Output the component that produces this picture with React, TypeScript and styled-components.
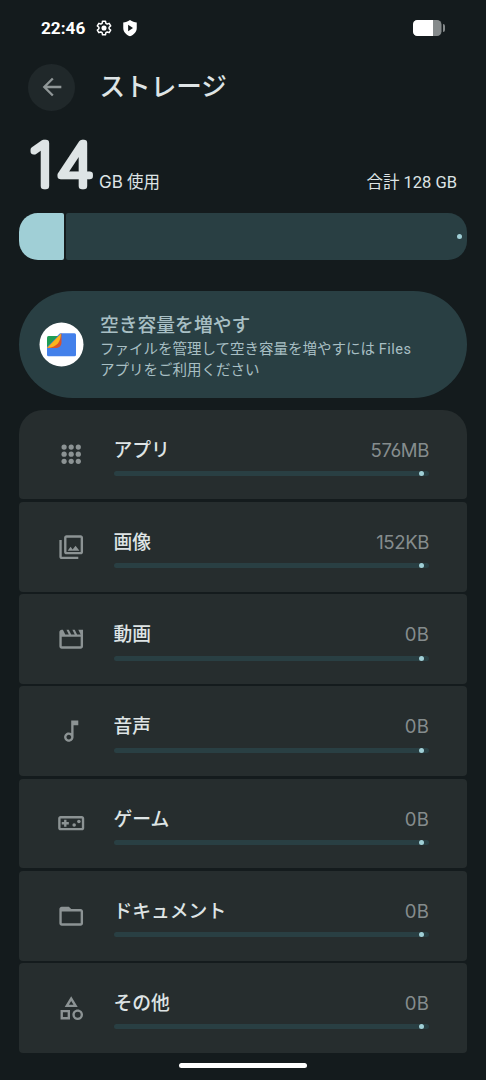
import React from "react";
import styled, { createGlobalStyle } from "styled-components";
import type { IconType } from "react-icons";
import {
  MdArrowBack,
  MdFolderOpen,
  MdOutlineAudiotrack,
  MdOutlineCategory,
  MdOutlinePhotoLibrary,
  MdOutlineVideogameAsset,
} from "react-icons/md";

const GlobalStyle = createGlobalStyle`
  * { box-sizing: border-box; }
  body {
    margin: 0;
    background: #141b1d;
    color: #dee4e5;
    font-family: Roboto, "Noto Sans CJK JP", sans-serif;
  }
`;

const Screen = styled.main`
  width: 486px;
  height: 1080px;
  padding: 0 19px;
  display: flex;
  flex-direction: column;
  overflow: hidden;
`;

const StatusBar = styled.div`
  height: 56px;
  padding: 0 22px;
  display: flex;
  align-items: center;
  color: #fff;
`;

const Clock = styled.span`
  width: 54px;
  font-size: 17.2px;
  font-weight: 700;
  line-height: 20px;
`;

const StatusIcon = styled.svg`
  width: 18px;
  height: 18px;
  margin-right: 8px;
`;

const Battery = styled.svg`
  width: 32px;
  height: 16px;
  margin-left: auto;
`;

const Header = styled.header`
  height: 63px;
  padding: 0 0 0.5px 9.2px;
  display: flex;
  align-items: center;
  gap: 24.3px;
`;

const BackButton = styled.button`
  width: 47px;
  height: 47px;
  border: 0;
  padding: 0;
  border-radius: 50%;
  background: #20282a;
  color: #8f9697;
  display: grid;
  place-items: center;
  font-size: 28px;
  svg { display: block; }
`;

const Title = styled.h1`
  margin: 0;
  font-size: 25.6px;
  font-weight: 500;
  line-height: 36px;
`;

const Usage = styled.section`
  height: 93.5px;
  padding: 0 10px 18px 11px;
  display: flex;
  align-items: flex-end;
  font-size: 16.5px;
  line-height: 24px;
`;

const BigNumber = styled.svg`
  width: 67px;
  height: 60px;
  margin-right: 2px;
  overflow: visible;
  text {
    font-family: Inter, sans-serif;
    font-size: 59px;
    font-weight: 100;
    fill: #dee4e5;
    stroke: #dee4e5;
    stroke-width: 6.4px;
    stroke-linejoin: round;
  }
`;

const Unit = styled.span`
  b {
    font-family: Inter, sans-serif;
    font-weight: 400;
    font-size: 17px;
  }
`;

const Total = styled.span`
  margin-left: auto;
`;

const StorageBar = styled.div`
  height: 47.5px;
  display: flex;
  gap: 2px;
`;

const UsedPart = styled.div`
  width: 44.5px;
  border-radius: 19px 2px 2px 19px;
  background: #a0cfd6;
`;

const FreePart = styled.div`
  flex: 1;
  padding-right: 5px;
  display: flex;
  align-items: center;
  justify-content: flex-end;
  border-radius: 2px 19px 19px 2px;
  background: #293f43;
`;

const StopDot = styled.i`
  width: 5px;
  height: 5px;
  border-radius: 50%;
  background: #a0cfd6;
`;

const FilesCard = styled.section`
  height: 107.5px;
  margin-top: 30.5px;
  padding-left: 20px;
  border-radius: 54px;
  background: #293f43;
  color: #a8bfc4;
  display: flex;
  align-items: center;
  gap: 16px;
`;

const FilesLogo = styled.svg`
  width: 45px;
  height: 45px;
  flex: none;
`;

const FilesCopy = styled.div`
  padding-top: 6px;
`;

const FilesTitle = styled.h2`
  margin: 0;
  font-size: 18.8px;
  font-weight: 500;
  line-height: 27px;
`;

const FilesText = styled.p`
  margin: 0;
  font-size: 14.5px;
  line-height: 20.5px;
  b {
    font-weight: 400;
    letter-spacing: 0.5px;
  }
`;

const List = styled.ul`
  list-style: none;
  margin: 11.6px 0 0;
  padding: 0;
  display: flex;
  flex-direction: column;
  gap: 2.35px;
`;

const Row = styled.li`
  height: 89.9px;
  padding: 0 38px 0 37.5px;
  display: flex;
  align-items: center;
  border-radius: 4px;
  background: #262d2e;
  &:first-child { border-radius: 24px 24px 4px 4px; }
`;

const RowIcon = styled.span`
  width: 57px;
  color: #8c9394;
  font-size: 28.4px;
  svg { display: block; }
`;

const RowBody = styled.div`
  flex: 1;
  padding-top: 2.6px;
`;

const RowLine = styled.div`
  display: flex;
  justify-content: space-between;
  align-items: baseline;
  line-height: 28px;
  margin-bottom: 6.5px;
`;

const RowLabel = styled.span`
  font-size: 18.8px;
  font-weight: 500;
`;

const RowSize = styled.span<{ $tight: boolean }>`
  font-family: Inter, sans-serif;
  font-feature-settings: "cv03";
  font-size: 18.6px;
  letter-spacing: ${(p) => (p.$tight ? "-0.4px" : "0.3px")};
  margin-right: ${(p) => (p.$tight ? "0" : "-0.3px")};
  color: #858c8d;
`;

const Track = styled.div`
  height: 5px;
  padding-right: 5px;
  display: flex;
  align-items: center;
  justify-content: flex-end;
  border-radius: 2.5px;
  background: #293f43;
`;

const HomeHandle = styled.div`
  width: 128px;
  height: 4.5px;
  margin: 10.5px auto 0;
  border-radius: 3px;
  background: #fff;
`;

const AppsGrid: IconType = () => (
  <svg width="1em" height="1em" viewBox="0 0 24 24" fill="currentColor">
    {[6, 12, 18].map((y) =>
      [6, 12, 18].map((x) => <circle key={`${x}-${y}`} cx={x} cy={y} r="2.2" />),
    )}
  </svg>
);

const Clapper: IconType = () => (
  <svg width="1em" height="1em" viewBox="0 0 24 24" fill="currentColor">
    <path d="M18 4l2 4h-3l-2-4h-2l2 4h-3l-2-4H8l2 4H7L5 4H4c-1.1 0-2 .9-2 2v12c0 1.1.9 2 2 2h16c1.1 0 2-.9 2-2V4h-4zm2 14H4v-8h16v8z" />
  </svg>
);

const categories: { label: string; size: string; Icon: IconType }[] = [
  { label: "アプリ", size: "576MB", Icon: AppsGrid },
  { label: "画像", size: "152KB", Icon: MdOutlinePhotoLibrary },
  { label: "動画", size: "0B", Icon: Clapper },
  { label: "音声", size: "0B", Icon: MdOutlineAudiotrack },
  { label: "ゲーム", size: "0B", Icon: MdOutlineVideogameAsset },
  { label: "ドキュメント", size: "0B", Icon: MdFolderOpen },
  { label: "その他", size: "0B", Icon: MdOutlineCategory },
];

export default function App() {
  return (
    <>
      <GlobalStyle />
      <Screen lang="ja">
        <StatusBar>
          <Clock>22:46</Clock>
          <StatusIcon viewBox="0 0 24 24">
            <path
              fill="none"
              stroke="currentColor"
              strokeWidth="2"
              strokeLinejoin="round"
              d="M10 3h4l.5 2.7 1.8 1.05 2.6-.95 2 3.45-2.1 1.75v2l2.1 1.75-2 3.45-2.6-.95-1.8 1.05L14 21h-4l-.5-2.7-1.8-1.05-2.6.95-2-3.45L5.2 13v-2L3.1 9.25l2-3.45 2.6.95 1.8-1.05z"
            />
            <circle cx="12" cy="12" r="3.4" fill="currentColor" />
          </StatusIcon>
          <StatusIcon viewBox="0 0 24 24">
            <path
              fill="currentColor"
              fillRule="evenodd"
              d="M12 1.2c3 2 6 2.8 9 3.3v7.5c0 5-3.8 9.2-9 11-5.2-1.8-9-6-9-11V4.5c3-.5 6-1.3 9-3.3zM9.5 7.8v8.4l6.5-4.2z"
            />
          </StatusIcon>
          <Battery viewBox="0 0 32 16">
            <rect width="28.5" height="16" rx="4.5" fill="#858a8b" />
            <path d="M4.5 0H20v16H4.5A4.5 4.5 0 0 1 0 11.5v-7A4.5 4.5 0 0 1 4.5 0z" fill="#fff" />
            <path d="M30 4a2 2 0 0 1 2 2v4a2 2 0 0 1-2 2z" fill="#858a8b" />
          </Battery>
        </StatusBar>
        <Header>
          <BackButton aria-label="戻る">
            <MdArrowBack />
          </BackButton>
          <Title>ストレージ</Title>
        </Header>
        <Usage>
          <BigNumber>
            <text x="-0.5 24.4" y="51.3" transform="scale(1.08 1)">14</text>
          </BigNumber>
          <Unit><b>GB</b> 使用</Unit>
          <Total>合計 128 GB</Total>
        </Usage>
        <StorageBar>
          <UsedPart />
          <FreePart>
            <StopDot />
          </FreePart>
        </StorageBar>
        <FilesCard>
          <FilesLogo viewBox="0 0 45 45">
            <circle cx="22.5" cy="22.5" r="22" fill="#fff" />
            <path d="M21 11.2h14.5a1.5 1.5 0 0 1 1.5 1.5v20a1.5 1.5 0 0 1-1.5 1.5H9.5a1.5 1.5 0 0 1-1.5-1.5V24z" fill="#4380ea" />
            <path d="M8 26 22.5 11.2v9c0 4-2.5 5.8-6.5 5.8z" fill="#d9532c" />
            <path d="M8 26 22 11.5c-.5 8-3 13.5-14 14.5z" fill="#fbb51c" />
            <path d="M8 25V15.5A1.5 1.5 0 0 1 9.5 14h9.5z" fill="#1f9d55" />
          </FilesLogo>
          <FilesCopy>
            <FilesTitle>空き容量を増やす</FilesTitle>
            <FilesText>
              ファイルを管理して空き容量を増やすには <b>Files</b>
              <br />
              アプリをご利用ください
            </FilesText>
          </FilesCopy>
        </FilesCard>
        <List>
          {categories.map(({ label, size, Icon }) => (
            <Row key={label}>
              <RowIcon>
                <Icon />
              </RowIcon>
              <RowBody>
                <RowLine>
                  <RowLabel>{label}</RowLabel>
                  <RowSize $tight={size.length > 2}>{size}</RowSize>
                </RowLine>
                <Track>
                  <StopDot />
                </Track>
              </RowBody>
            </Row>
          ))}
        </List>
        <HomeHandle />
      </Screen>
    </>
  );
}
